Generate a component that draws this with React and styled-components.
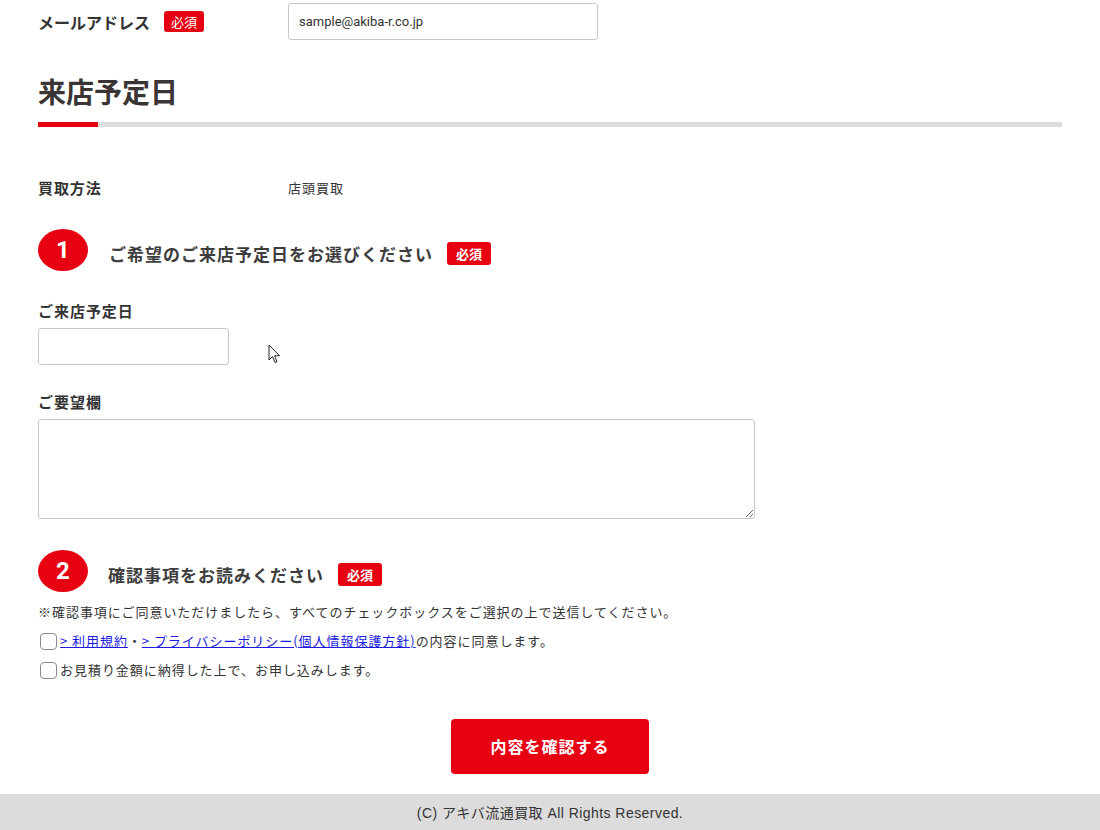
import React from "react";
import styled, { createGlobalStyle } from "styled-components";

const GlobalStyle = createGlobalStyle`
  html, body {
    margin: 0;
    padding: 0;
    background: #fff;
  }
  body {
    font-family: "Noto Sans CJK JP", "Noto Sans", sans-serif;
    color: #333;
    letter-spacing: 0.06em;
  }
`;

const RED = "#e60012";

const Page = styled.div`
  position: relative;
  width: 1100px;
  min-height: 830px;
  display: flex;
  flex-direction: column;
`;

const Main = styled.main`
  padding: 3px 38px 0;
  display: flex;
  flex-direction: column;
`;

const Row = styled.div`
  display: flex;
  align-items: center;
  height: ${(p) => p.$h || "auto"};
  margin-top: ${(p) => p.$mt || 0}px;
`;

const RowLabel = styled.div`
  width: 250px;
  display: flex;
  align-items: center;
  font-size: ${(p) => p.$size || 15}px;
  font-weight: bold;
  line-height: 20px;
  letter-spacing: ${(p) => p.$ls || "0.06em"};
`;

const Badge = styled.span`
  display: inline-flex;
  align-items: center;
  justify-content: center;
  background: ${RED};
  color: #fff;
  font-size: 13px;
  font-weight: ${(p) => (p.$bold ? "bold" : "normal")};
  letter-spacing: 0;
  width: ${(p) => p.$w || 44}px;
  height: ${(p) => p.$h || 23}px;
  border-radius: 3px;
  margin-left: ${(p) => p.$ml || 0}px;
  margin-top: ${(p) => p.$mt || 0}px;
`;

const TextInput = styled.input`
  box-sizing: border-box;
  width: ${(p) => p.$w}px;
  height: 37px;
  border: 1px solid #c8c8c8;
  border-radius: 3px;
  padding: 0 10px;
  font-family: Roboto, "Liberation Sans", sans-serif;
  font-size: 13px;
  color: #333;
  letter-spacing: 0;
  outline: none;
  background: #fff;
`;

const SectionTitle = styled.h2`
  margin: 31px 0 0;
  font-size: 28px;
  line-height: 40px;
  font-weight: bold;
  letter-spacing: 0;
  color: #3a3434;
`;

const TitleRule = styled.div`
  margin-top: 11px;
  height: 5px;
  background: #dcdcdc;
  &::before {
    content: "";
    display: block;
    width: 60px;
    height: 5px;
    background: ${RED};
  }
`;

const Value = styled.span`
  font-size: 13px;
  line-height: 20px;
`;

const Step = styled.div`
  display: flex;
  align-items: center;
  margin-top: ${(p) => p.$mt}px;
`;

const StepNum = styled.span`
  width: 50px;
  height: 42px;
  border-radius: 50%;
  background: ${RED};
  color: #fff;
  display: flex;
  align-items: center;
  justify-content: center;
  font-family: Roboto, "Liberation Sans", sans-serif;
  font-weight: bold;
  font-size: 24px;
  letter-spacing: 0;
`;

const StepTitle = styled.span`
  margin-left: ${(p) => p.$ml || 21}px;
  margin-top: 6px;
  font-size: 17px;
  font-weight: bold;
  letter-spacing: 1px;
  color: #3d3d3d;
`;

const FieldLabel = styled.label`
  display: block;
  margin-top: ${(p) => p.$mt}px;
  font-size: 15px;
  line-height: 22px;
  font-weight: bold;
`;

const Field = styled.div`
  margin-top: 6px;
  display: flex;
`;

const TextArea = styled.textarea`
  box-sizing: border-box;
  width: 717px;
  height: 100px;
  border: 1px solid #c8c8c8;
  border-radius: 3px;
  outline: none;
  display: block;
`;

const Note = styled.p`
  margin: 10px 0 0;
  font-size: 13px;
  line-height: 20px;
`;

const CheckRow = styled.label`
  display: flex;
  align-items: center;
  margin-top: 9px;
  font-size: 13px;
  line-height: 20px;
`;

const Box = styled.input.attrs({ type: "checkbox" })`
  appearance: none;
  box-sizing: border-box;
  width: 17px;
  height: 17px;
  margin: 0 3px 0 2px;
  border: 1px solid #8a8a8a;
  border-radius: 4px;
  background: #fff;
`;

const Link = styled.a`
  color: #1a1ae0;
  text-decoration: underline;
`;

const Submit = styled.button`
  align-self: center;
  margin-top: 39px;
  width: 198px;
  height: 55px;
  border: none;
  border-radius: 4px;
  background: ${RED};
  color: #fff;
  font-family: "Noto Sans CJK JP", sans-serif;
  font-size: 16px;
  font-weight: bold;
  letter-spacing: 1px;
  padding-bottom: 3px;
`;

const Footer = styled.footer`
  margin-top: 20px;
  height: 36px;
  background: #dcdcdc;
  display: flex;
  align-items: center;
  justify-content: center;
  font-family: "Liberation Sans", "Noto Sans CJK JP", sans-serif;
  font-size: 14px;
  letter-spacing: 0.45px;
  color: #333;
`;

const Cursor = styled.svg`
  position: absolute;
  left: 268px;
  top: 344px;
`;

export default function App() {
  return (
    <Page>
      <GlobalStyle />
      <Main>
        <Row $h="37px">
          <RowLabel $size={16} $ls="0">
            メールアドレス
            <Badge $w={40} $h={21} $ml={14}>必須</Badge>
          </RowLabel>
          <TextInput $w={310} defaultValue="sample@akiba-r.co.jp" />
        </Row>

        <SectionTitle>来店予定日</SectionTitle>
        <TitleRule />

        <Row $mt={51}>
          <RowLabel>買取方法</RowLabel>
          <Value>店頭買取</Value>
        </Row>

        <Step $mt={31}>
          <StepNum>1</StepNum>
          <StepTitle>ご希望のご来店予定日をお選びください</StepTitle>
          <Badge $bold $ml={14} $mt={7}>必須</Badge>
        </Step>

        <FieldLabel $mt={29}>ご来店予定日</FieldLabel>
        <Field>
          <TextInput $w={191} />
        </Field>

        <FieldLabel $mt={26}>ご要望欄</FieldLabel>
        <Field>
          <TextArea />
        </Field>

        <Step $mt={31}>
          <StepNum>2</StepNum>
          <StepTitle $ml={20}>確認事項をお読みください</StepTitle>
          <Badge $bold $ml={14} $mt={7}>必須</Badge>
        </Step>

        <Note>
          ※確認事項にご同意いただけましたら、すべてのチェックボックスをご選択の上で送信してください。
        </Note>
        <CheckRow>
          <Box />
          <Link href="#">&gt; 利用規約</Link>・
          <Link href="#">&gt; プライバシーポリシー(個人情報保護方針)</Link>
          の内容に同意します。
        </CheckRow>
        <CheckRow>
          <Box />
          お見積り金額に納得した上で、お申し込みします。
        </CheckRow>

        <Submit>内容を確認する</Submit>
      </Main>
      <Footer>(C) アキバ流通買取 All Rights Reserved.</Footer>

      <Cursor width="13" height="20" viewBox="0 0 13 20">
        <path
          d="M1 1 L1 16 L4.5 12.5 L7 18.5 L9 17.7 L6.6 11.8 L11.5 11.8 Z"
          fill="#fff"
          stroke="#222"
          strokeWidth="1"
          strokeLinejoin="round"
        />
      </Cursor>
    </Page>
  );
}
